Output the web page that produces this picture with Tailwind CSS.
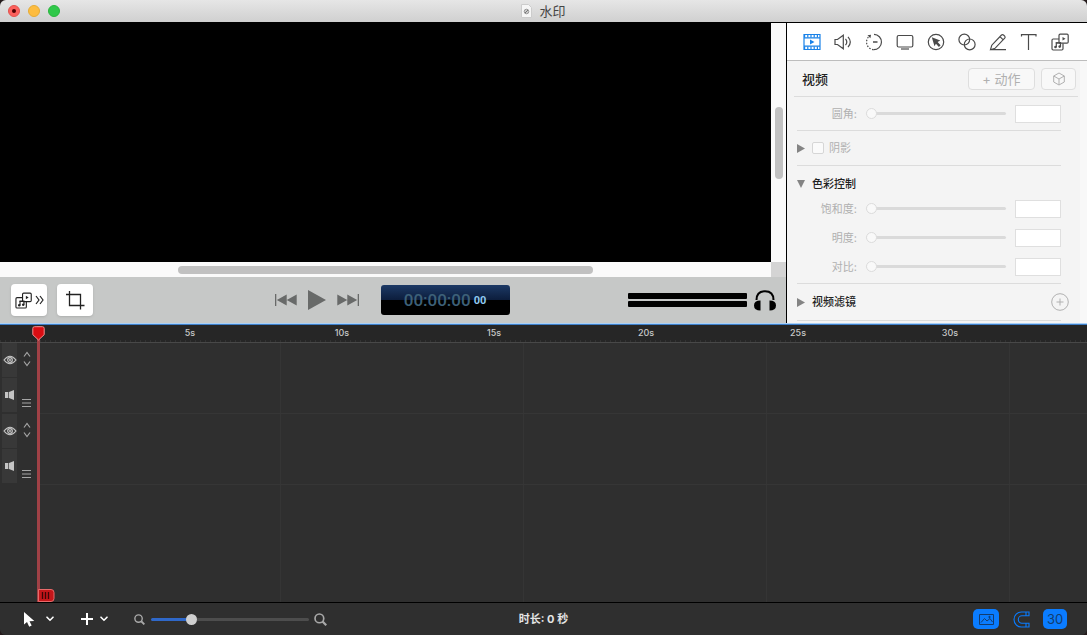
<!DOCTYPE html>
<html lang="zh-CN">
<head>
  <meta charset="UTF-8">
  <meta name="viewport" content="width=device-width, initial-scale=1.0">
  <title>水印</title>
  <script src="https://cdn.jsdelivr.net/npm/@tailwindcss/browser@4"></script>
</head>
<body class="bg-[#241a1b] font-['Inter','Noto_Sans_CJK_SC',sans-serif]">
<!-- shared icons -->
<svg class="hidden">
  <symbol id="media" viewBox="0 0 18 18">
    <g fill="none" stroke="currentColor" stroke-width="1.2">
      <path d="M8 6H2.2Q1 6 1 7.200V15.800Q1 17 2.200 17H10.800Q12 17 12 15.800V10.500"/>
      <rect x="8" y="1.200" width="9.200" height="9" rx="1.200"/>
      <path d="M5.300 14V9.800h4.200V13.500"/>
    </g>
    <g fill="currentColor"><path d="M4.800 9.200h5.200v1.400H4.800z"/><circle cx="4.500" cy="14" r="1.300"/><circle cx="8.700" cy="13.600" r="1.300"/><path d="M11.500 4l3 1.800-3 1.800z"/></g>
  </symbol>
  <symbol id="eye" viewBox="0 0 14 10">
    <path d="M1 5Q7-2.500 13 5Q7 12.500 1 5z" fill="none" stroke="currentColor" stroke-width="1.200"/>
    <circle cx="7" cy="5" r="2.300" fill="none" stroke="currentColor" stroke-width="1.200"/><circle cx="7" cy="5" r="1" fill="currentColor"/>
  </symbol>
  <symbol id="speaker" viewBox="0 0 10 10"><path d="M0 2h3.300v6H0zM4 2L9 0v10L4 8z" fill="currentColor"/></symbol>
  <symbol id="updown" viewBox="0 0 8 16"><path d="M1 5.500l3-4L7 5.500M1 10.500l3 4L7 10.500" fill="none" stroke="currentColor" stroke-width="1.200"/></symbol>
  <symbol id="lines" viewBox="0 0 9 8"><path d="M0 .5h9M0 4h9M0 7.500h9" stroke="currentColor"/></symbol>
  <symbol id="chevron" viewBox="0 0 8 6"><path d="M1 1.200l3 3 3-3" fill="none" stroke="currentColor" stroke-width="1.600" stroke-linecap="round"/></symbol>
  <symbol id="search" viewBox="0 0 14 14"><g fill="none" stroke="currentColor" stroke-width="1.800"><circle cx="5.800" cy="5.800" r="4.700"/><path d="M9.200 9.200l4 4" stroke-width="2.400"/></g></symbol>
  <symbol id="skip" viewBox="0 0 22 12"><path d="M0 0h1.300v12H0zM11.700 .5v11L1.800 6zM21.700 .5v11L11.700 6z" fill="currentColor"/></symbol>
</svg>

<div class="flex h-screen flex-col overflow-hidden rounded-md bg-[#2f2f2f]">

  <!-- title bar -->
  <header class="grid h-[23px] shrink-0 grid-cols-[1fr_auto_1fr] items-center border-b border-black bg-linear-to-b from-[#e6e6e6] to-[#d0d0d0] px-2">
    <div class="flex gap-2">
      <button aria-label="关闭" class="flex size-3 items-center justify-center rounded-full border border-[#e0534d] bg-[#fc605c]"><span class="size-1 rounded-full bg-[#4d0000]"></span></button>
      <button aria-label="最小化" class="size-3 rounded-full border border-[#e5ab35] bg-[#fdbc40]"></button>
      <button aria-label="缩放" class="size-3 rounded-full border border-[#29b53d] bg-[#30c84a]"></button>
    </div>
    <h1 class="flex items-center gap-[7px] text-[13px] leading-5 text-[#444]">
      <svg class="h-3.5 w-[11px]" viewBox="0 0 11 14"><path d="M.5.5h7l3 3v10H.5z" fill="#f6f6f6" stroke="#ccc"/><circle cx="5.500" cy="7.500" r="2.300" fill="#ccc" stroke="#999"/><path d="M4 9l3-3" stroke="#777"/></svg>
      水印
    </h1>
  </header>

  <main class="flex h-[300px] shrink-0">
    <!-- preview -->
    <section class="flex min-w-0 flex-1 flex-col border-r border-black bg-[#c6c8c7]">
      <div class="flex min-h-0 flex-1">
        <div class="flex-1 bg-black"></div>
        <div class="flex w-[15px] justify-center bg-[#fafafa] pt-[84px]"><div class="h-[72px] w-2 rounded-full bg-[#c1c1c1]"></div></div>
      </div>
      <div class="flex h-[15px]">
        <div class="flex flex-1 items-center bg-[#fafafa] pl-[22.6%]"><div class="h-2 w-[70%] rounded-full bg-[#c1c1c1]"></div></div>
        <div class="w-[15px] bg-[#d4d4d4]"></div>
      </div>
      <div class="flex h-[46px] items-center pr-[9px] pl-[11px]">
        <div class="flex flex-1 gap-2.5">
          <button aria-label="媒体" class="flex h-8 w-9 items-center justify-center gap-[3px] rounded-sm bg-white text-[#222] shadow-sm">
            <svg class="size-[17px]"><use href="#media"/></svg>
            <svg class="h-2.5 w-[9px]" viewBox="0 0 9 10" fill="none" stroke="currentColor" stroke-width="1.200"><path d="M1 1l3 4-3 4M5 1l3 4-3 4"/></svg>
          </button>
          <button aria-label="裁剪" class="flex h-8 w-9 items-center justify-center rounded-sm bg-white text-[#222] shadow-sm">
            <svg class="size-5" viewBox="0 0 20 20" fill="none" stroke="currentColor" stroke-width="1.300"><path d="M1 4.500h14.500V19.500M4.500 1v14.500H19.500"/></svg>
          </button>
        </div>
        <div class="mr-1 flex items-center text-[#686a69]">
          <button aria-label="上一个"><svg class="h-3 w-[22px]"><use href="#skip"/></svg></button>
          <button aria-label="播放" class="ml-[11px]"><svg class="h-5 w-[18px]" viewBox="0 0 18 20"><path d="M0 0l18 10L0 20z" fill="currentColor"/></svg></button>
          <button aria-label="下一个" class="ml-[11px]"><svg class="h-3 w-[22px] rotate-180"><use href="#skip"/></svg></button>
          <div class="ml-[22px] flex h-[30px] w-[129px] items-center justify-center gap-[3px] rounded-[3px] bg-linear-to-b from-[#1d3a66] from-0% via-[#0c1d3c] via-50% to-black to-50% font-['Roboto',sans-serif] leading-none">
            <span class="text-[17px] font-medium text-[#3d6078]">00:00:00</span>
            <span class="text-[11px] font-bold text-[#8fcaf0]">00</span>
          </div>
        </div>
        <div class="flex flex-1 items-center justify-end gap-1.5">
          <div class="flex w-[119px] flex-col gap-0.5"><div class="h-1.5 rounded-[1px] bg-black"></div><div class="h-1.5 rounded-[1px] bg-black"></div></div>
          <button aria-label="监听"><svg class="h-[21px] w-6" viewBox="0 0 24 21"><path d="M3.500 10Q3.500 1.200 12 1.200T20.500 10" fill="none" stroke="#000" stroke-width="2"/><path d="M7.500 10.500v10Q1 20.500 1 15.500T7.500 10.500zM16.500 10.500v10Q23 20.500 23 15.500T16.500 10.500z"/></svg></button>
        </div>
      </div>
    </section>

    <!-- inspector -->
    <aside class="flex w-[300px] shrink-0 flex-col overflow-hidden bg-[#f4f4f4]">
      <nav class="flex h-[38px] shrink-0 items-center border-b border-[#bdbdbd] bg-white pl-[9px] text-[#4a4a4a]">
        <button aria-label="视频" class="flex w-[31px] justify-center text-[#1a82e8]">
          <svg class="size-[18px]" viewBox="0 0 18 18" fill="none" stroke="currentColor"><path d="M1 1.500h16v15H1zM1 4.800h16M1 13.200h16" stroke-width="1.200"/><path d="M1 3.100h16M1 14.900h16" stroke-width="3" stroke-dasharray="1.200 2"/><path d="M7 6.500l4.500 2.500L7 11.500z" fill="currentColor" stroke="none"/></svg>
        </button>
        <button aria-label="音频" class="flex w-[31px] justify-center">
          <svg class="size-[18px]" viewBox="0 0 18 18" fill="none" stroke="currentColor" stroke-width="1.200"><path d="M1 6.500h2.500L9.300 2.300v13.400L3.500 11.500H1zM11.500 5.800q2.600 3.200 0 6.400M14 3.800q4.600 5.200 0 10.400"/></svg>
        </button>
        <button aria-label="动作" class="flex w-[31px] justify-center">
          <svg class="size-[18px]" viewBox="0 0 18 18" fill="none" stroke="currentColor" stroke-width="1.200"><path d="M9 1.300a7.700 7.700 0 1 1-.5 15.400"/><path d="M8.500 16.700A7.700 7.700 0 0 1 3.700 3.700" stroke-dasharray="1.500 1.500"/><path d="M8 9h4.500" stroke-width="1.500"/><path d="M2.500 2.200l3.500-.4-.6 3.400z" fill="currentColor" stroke="none"/></svg>
        </button>
        <button aria-label="屏幕录制" class="flex w-[31px] justify-center">
          <svg class="size-[18px]" viewBox="0 0 18 18" fill="none" stroke="currentColor" stroke-width="1.200"><rect x="1.200" y="2.500" width="15.600" height="11.500" rx="1.500"/><path d="M5 16h8"/></svg>
        </button>
        <button aria-label="标注" class="flex w-[31px] justify-center">
          <svg class="size-[18px]" viewBox="0 0 18 18"><circle cx="9" cy="9" r="7.700" fill="none" stroke="currentColor" stroke-width="1.200"/><path d="M4.800 4.300l8.500 3.200-2.700 1.500 3 3.200-1.700 1.700-3-3.200L7.500 13.300z" fill="currentColor"/></svg>
        </button>
        <button aria-label="转场" class="flex w-[31px] justify-center">
          <svg class="size-[18px]" viewBox="0 0 18 18" fill="none" stroke="currentColor" stroke-width="1.200"><circle cx="6.300" cy="6.600" r="5.400"/><circle cx="11.700" cy="11.400" r="5.400"/></svg>
        </button>
        <button aria-label="画笔" class="flex w-[31px] justify-center">
          <svg class="size-[18px]" viewBox="0 0 18 18" fill="none" stroke="currentColor" stroke-width="1.200"><path d="M1.500 16.700l1.300-4.500L12.500 2q1-.9 2 0l1.200 1.200q.9 1 0 2L6 15.300zM11 3.600l3.200 3.200M1.500 16.700H17"/></svg>
        </button>
        <button aria-label="文本" class="flex w-[31px] justify-center">
          <svg class="size-[18px]" viewBox="0 0 18 18" fill="none" stroke="currentColor" stroke-width="1.200"><path d="M1.500 3.500V1.600h14.500V3.500M8.500 1.600v15.400"/></svg>
        </button>
        <button aria-label="媒体库" class="flex w-[31px] justify-center"><svg class="size-[18px]"><use href="#media"/></svg></button>
      </nav>

      <div class="flex-1 border-r-[7px] border-[#f8f8f8] text-[11px] leading-4 text-[#b0b0b0]">
        <div class="mr-0.5 ml-[7px] flex h-9 items-center border-b border-[#dcdcdc] pr-0.5 pl-2">
          <h2 class="flex-1 text-[13px] font-medium text-[#222]">视频</h2>
          <button class="h-[22px] w-[67px] rounded-sm border border-[#dedede] bg-[#f8f8f8] text-[13px] leading-5 text-[#b0b0b0]">+ 动作</button>
          <button aria-label="三维" class="ml-1.5 flex h-[22px] w-[35px] items-center justify-center rounded-sm border border-[#dedede] bg-[#f8f8f8]">
            <svg class="size-3.5" viewBox="0 0 14 14" fill="none" stroke="currentColor"><path d="M7 1l5.300 3v6L7 13 1.700 10V4zM1.700 4L7 7l5.300-3M7 7v6"/></svg>
          </button>
        </div>

        <div class="mr-[19px] ml-2.5">
          <div class="flex h-[34px] items-center gap-[9px] border-b border-[#dcdcdc]">
            <label for="corner" class="w-[60px] text-right">圆角:</label>
            <input id="corner" type="range" value="0" disabled class="h-3 min-w-0 flex-1 appearance-none bg-transparent [&::-webkit-slider-runnable-track]:h-[3px] [&::-webkit-slider-runnable-track]:rounded-full [&::-webkit-slider-runnable-track]:bg-[#dadada] [&::-webkit-slider-thumb]:-mt-1 [&::-webkit-slider-thumb]:size-[11px] [&::-webkit-slider-thumb]:appearance-none [&::-webkit-slider-thumb]:rounded-full [&::-webkit-slider-thumb]:border [&::-webkit-slider-thumb]:border-[#dcdcdc] [&::-webkit-slider-thumb]:bg-[#f9f9f9]">
            <input type="text" aria-label="圆角数值" disabled class="h-[18px] w-[46px] border border-[#dfdfdf] bg-white">
          </div>

          <div class="flex h-[35px] items-center border-b border-[#dcdcdc]">
            <button aria-label="展开阴影"><svg class="h-[9px] w-2 text-[#848484]" viewBox="0 0 8 9"><path d="M0 0l8 4.500L0 9z" fill="currentColor"/></svg></button>
            <input id="shadow" type="checkbox" disabled class="ml-[7px] size-3 appearance-none rounded-[2px] border border-[#d6d6d6] bg-[#fafafa]">
            <label for="shadow" class="ml-[5px]">阴影</label>
          </div>

          <div class="border-b border-[#dcdcdc] pt-[5px] pb-0.5">
            <h3 class="flex h-[23px] items-end gap-[7px] pb-0.5 font-medium text-[#222]">
              <button aria-label="收起色彩控制" class="flex h-4 items-center"><svg class="h-2 w-2 text-[#848484]" viewBox="0 0 8 8"><path d="M0 0h8L4 8z" fill="currentColor"/></svg></button>
              色彩控制
            </h3>
            <div class="flex h-[29px] items-center gap-[9px]">
              <label for="saturation" class="w-[60px] text-right">饱和度:</label>
              <input id="saturation" type="range" value="0" disabled class="h-3 min-w-0 flex-1 appearance-none bg-transparent [&::-webkit-slider-runnable-track]:h-[3px] [&::-webkit-slider-runnable-track]:rounded-full [&::-webkit-slider-runnable-track]:bg-[#dadada] [&::-webkit-slider-thumb]:-mt-1 [&::-webkit-slider-thumb]:size-[11px] [&::-webkit-slider-thumb]:appearance-none [&::-webkit-slider-thumb]:rounded-full [&::-webkit-slider-thumb]:border [&::-webkit-slider-thumb]:border-[#dcdcdc] [&::-webkit-slider-thumb]:bg-[#f9f9f9]">
              <input type="text" aria-label="饱和度数值" disabled class="h-[18px] w-[46px] border border-[#dfdfdf] bg-white">
            </div>
            <div class="flex h-[29px] items-center gap-[9px]">
              <label for="brightness" class="w-[60px] text-right">明度:</label>
              <input id="brightness" type="range" value="0" disabled class="h-3 min-w-0 flex-1 appearance-none bg-transparent [&::-webkit-slider-runnable-track]:h-[3px] [&::-webkit-slider-runnable-track]:rounded-full [&::-webkit-slider-runnable-track]:bg-[#dadada] [&::-webkit-slider-thumb]:-mt-1 [&::-webkit-slider-thumb]:size-[11px] [&::-webkit-slider-thumb]:appearance-none [&::-webkit-slider-thumb]:rounded-full [&::-webkit-slider-thumb]:border [&::-webkit-slider-thumb]:border-[#dcdcdc] [&::-webkit-slider-thumb]:bg-[#f9f9f9]">
              <input type="text" aria-label="明度数值" disabled class="h-[18px] w-[46px] border border-[#dfdfdf] bg-white">
            </div>
            <div class="flex h-[29px] items-center gap-[9px]">
              <label for="contrast" class="w-[60px] text-right">对比:</label>
              <input id="contrast" type="range" value="0" disabled class="h-3 min-w-0 flex-1 appearance-none bg-transparent [&::-webkit-slider-runnable-track]:h-[3px] [&::-webkit-slider-runnable-track]:rounded-full [&::-webkit-slider-runnable-track]:bg-[#dadada] [&::-webkit-slider-thumb]:-mt-1 [&::-webkit-slider-thumb]:size-[11px] [&::-webkit-slider-thumb]:appearance-none [&::-webkit-slider-thumb]:rounded-full [&::-webkit-slider-thumb]:border [&::-webkit-slider-thumb]:border-[#dcdcdc] [&::-webkit-slider-thumb]:bg-[#f9f9f9]">
              <input type="text" aria-label="对比数值" disabled class="h-[18px] w-[46px] border border-[#dfdfdf] bg-white">
            </div>
          </div>

          <div class="flex h-[37px] items-center border-b border-[#dcdcdc]">
            <h3 class="flex flex-1 items-center gap-[7px] font-medium text-[#222]">
              <button aria-label="展开视频滤镜"><svg class="h-[9px] w-2 text-[#848484]" viewBox="0 0 8 9"><path d="M0 0l8 4.500L0 9z" fill="currentColor"/></svg></button>
              视频滤镜
            </h3>
            <button aria-label="添加滤镜" class="-mr-2"><svg class="size-[18px]" viewBox="0 0 18 18" fill="none" stroke="currentColor"><circle cx="9" cy="9" r="8.300"/><path d="M9 5.500v7M5.500 9h7"/></svg></button>
          </div>
        </div>
      </div>
    </aside>
  </main>

  <!-- timeline -->
  <section class="relative flex min-h-0 flex-1 flex-col border-t border-[#a9d0f7]">
    <div class="flex h-[19px] shrink-0 overflow-hidden border-t border-b border-t-[#3d7fca] border-b-[#484848] bg-[#262626] bg-[repeating-linear-gradient(90deg,#333_0_1px,transparent_1px_5px)] bg-[length:100%_2px] bg-bottom bg-no-repeat pl-[114px] text-center text-[9px] leading-4 font-medium text-[#c8c8c8]">
      <span class="w-[152px] shrink-0">5s</span>
      <span class="w-[152px] shrink-0">10s</span>
      <span class="w-[152px] shrink-0">15s</span>
      <span class="w-[152px] shrink-0">20s</span>
      <span class="w-[152px] shrink-0">25s</span>
      <span class="w-[152px] shrink-0">30s</span>
    </div>
    <div class="flex min-h-0 flex-1">
      <div class="w-[38px] shrink-0 pl-0.5 text-[#c4c4c4]">
        <div class="flex h-[71px] gap-[5px]">
          <div class="flex w-[15px] flex-col gap-px">
            <button aria-label="显示轨道 1" class="flex h-[34px] items-center justify-center bg-[#383838]"><svg class="h-2.5 w-3.5"><use href="#eye"/></svg></button>
            <button aria-label="轨道 1 声音" class="flex h-[34px] items-center justify-center bg-[#383838]"><svg class="size-2.5"><use href="#speaker"/></svg></button>
          </div>
          <div class="flex flex-col items-center justify-between pt-2 pb-[7px] text-[#a5a5a5]">
            <button aria-label="轨道 1 高度"><svg class="h-4 w-2"><use href="#updown"/></svg></button>
            <button aria-label="移动轨道 1"><svg class="h-2 w-[9px]"><use href="#lines"/></svg></button>
          </div>
        </div>
        <div class="flex h-[71px] gap-[5px]">
          <div class="flex w-[15px] flex-col gap-px">
            <button aria-label="显示轨道 2" class="flex h-[34px] items-center justify-center bg-[#383838]"><svg class="h-2.5 w-3.5"><use href="#eye"/></svg></button>
            <button aria-label="轨道 2 声音" class="flex h-[34px] items-center justify-center bg-[#383838]"><svg class="size-2.5"><use href="#speaker"/></svg></button>
          </div>
          <div class="flex flex-col items-center justify-between pt-2 pb-[7px] text-[#a5a5a5]">
            <button aria-label="轨道 2 高度"><svg class="h-4 w-2"><use href="#updown"/></svg></button>
            <button aria-label="移动轨道 2"><svg class="h-2 w-[9px]"><use href="#lines"/></svg></button>
          </div>
        </div>
      </div>
      <div class="flex-1 bg-[repeating-linear-gradient(90deg,transparent_0_242px,#353535_242px_243px)]">
        <div class="h-[71px] border-b border-[#363636]"></div>
        <div class="h-[71px] border-b border-[#363636]"></div>
      </div>
    </div>
    <!-- playhead -->
    <div class="absolute top-0.5 bottom-0 left-8 w-6">
      <div class="ml-[5px] h-full w-[3px] bg-[#a04146]"></div>
      <svg class="absolute top-0 left-0 h-[15px] w-[13px]" viewBox="0 0 13 15"><path d="M2.500.7h8q1.700 0 1.700 1.700v6.300L6.500 14 .8 8.700V2.400Q.8.700 2.500.7z" fill="#d90d12" stroke="#f09090"/></svg>
      <svg class="absolute bottom-0 left-1.5 h-[13px] w-[17px]" viewBox="0 0 17 13"><path d="M.5.500H13q3 0 3 3v6q0 3-3 3H.5z" fill="#c4161a" stroke="#e86b6b"/><path d="M4.500 3v7M7.500 3v7M10.500 3v7" stroke="#3d0607" stroke-width="1.300"/></svg>
    </div>
  </section>

  <!-- bottom bar -->
  <footer class="grid h-[33px] shrink-0 grid-cols-[1fr_auto_1fr] items-center border-t border-black bg-[#2f2f2f] pr-5 pl-6 text-white">
    <div class="flex items-center">
      <button aria-label="选择工具" class="flex w-[30px] items-center justify-between">
        <svg class="h-[15px] w-[11px]" viewBox="0 0 11 15"><path d="M0 0v12.500l3-2.500 2.200 4.800 2.500-1.200L5.500 9.200l4.800-.2z" fill="currentColor"/></svg>
        <svg class="h-1.5 w-2"><use href="#chevron"/></svg>
      </button>
      <button aria-label="添加轨道" class="ml-[27px] flex w-[27px] items-center justify-between">
        <svg class="size-3" viewBox="0 0 12 12"><path d="M6 0v12M0 6h12" stroke="currentColor" stroke-width="2"/></svg>
        <svg class="h-1.5 w-2"><use href="#chevron"/></svg>
      </button>
      <label for="zoom" class="ml-[26px] flex w-[17px] text-[#a8a8a8]"><svg class="size-[11px]"><use href="#search"/></svg></label>
      <input id="zoom" type="range" min="0" max="100" value="24" aria-label="时间线缩放" class="h-3 w-[158px] appearance-none bg-transparent [&::-webkit-slider-runnable-track]:h-[3px] [&::-webkit-slider-runnable-track]:rounded-full [&::-webkit-slider-runnable-track]:bg-linear-to-r [&::-webkit-slider-runnable-track]:from-[#2f68c9] [&::-webkit-slider-runnable-track]:from-25% [&::-webkit-slider-runnable-track]:to-[#4d4d4d] [&::-webkit-slider-runnable-track]:to-25% [&::-webkit-slider-thumb]:-mt-1 [&::-webkit-slider-thumb]:size-[11px] [&::-webkit-slider-thumb]:appearance-none [&::-webkit-slider-thumb]:rounded-full [&::-webkit-slider-thumb]:bg-[#cfcfcf]">
      <svg class="ml-[5px] size-[13px] text-[#a8a8a8]"><use href="#search"/></svg>
    </div>
    <p class="pr-1 text-[11px] leading-4 font-bold text-[#e4e4e4]">时长: 0 秒</p>
    <div class="flex items-center justify-end text-[#0a7cff]">
      <button aria-label="缩略图" class="flex h-5 w-[26px] items-center justify-center rounded-[5px] bg-[#0a7cff] text-[#123c70]">
        <svg class="h-[11px] w-[15px]" viewBox="0 0 15 11" fill="none" stroke="currentColor"><path d="M.5.500h14v10H.5zM2 8.500l3.500-4L8 7l3-2.500 2.500 3.500"/><circle cx="10.500" cy="3" r=".7" fill="currentColor"/></svg>
      </button>
      <button aria-label="吸附" class="ml-3.5">
        <svg class="h-[17px] w-[17px]" viewBox="0 0 17 17" fill="none" stroke="currentColor" stroke-width="1.100"><path d="M16 1H8.500a7.500 7.500 0 0 0 0 15H16v-3.800H9a3.700 3.700 0 0 1 0-7.400h7zM13 1v3.800M13 12.200V16"/></svg>
      </button>
      <button aria-label="帧率 30" class="ml-[13px] h-5 w-6 rounded-[5px] bg-[#0a7cff] text-[13px] leading-5 text-[#123c70]">30</button>
    </div>
  </footer>
</div>
</body>
</html>
